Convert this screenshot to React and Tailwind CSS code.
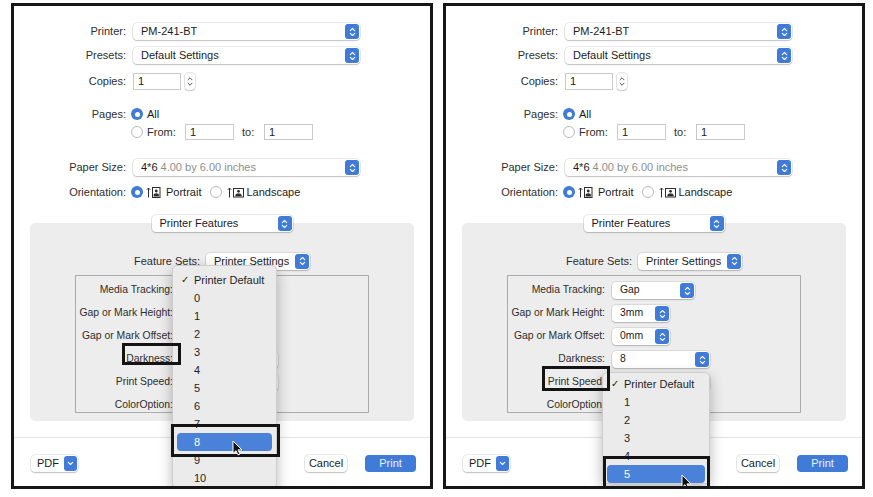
import React from "react";

// white up/down chevrons used on every popup knob
function Arrows() {
  return (
    <svg width="7" height="10" viewBox="0 0 7 10" fill="none" stroke="#fff" strokeWidth="1.1" strokeLinecap="round" strokeLinejoin="round">
      <path d="M1.3 3.7 3.5 1.5 5.7 3.7" />
      <path d="M1.3 6.3 3.5 8.5 5.7 6.3" />
    </svg>
  );
}

function BlueKnob() {
  return (
    <span className="flex h-[15px] w-[14px] shrink-0 items-center justify-center rounded-[3px] bg-[#3f7bd7]">
      <Arrows />
    </span>
  );
}

function Popup({ className = "", children }) {
  return (
    <div
      className={`flex h-[17px] shrink-0 items-center justify-between rounded-[4px] bg-white pl-[8px] pr-px shadow-[0_0_0_0.5px_rgba(0,0,0,0.16),0_1px_1.5px_rgba(0,0,0,0.18)] ${className}`}
    >
      <span className="truncate text-[#1c1c1c]">{children}</span>
      <BlueKnob />
    </div>
  );
}

function Radio({ on }) {
  if (on) {
    return (
      <span className="flex h-[12px] w-[12px] shrink-0 items-center justify-center rounded-full bg-[#3f7bd7]">
        <span className="h-[5px] w-[5px] rounded-full bg-white" />
      </span>
    );
  }
  return <span className="block h-[12px] w-[12px] shrink-0 rounded-full border border-[#b9b9b9] bg-white" />;
}

function Field({ className = "", children }) {
  return (
    <div className={`flex h-[16px] items-center border border-[#cacaca] bg-white pl-[4px] text-[#1c1c1c] ${className}`}>
      {children}
    </div>
  );
}

function PortraitIcon() {
  return (
    <svg width="15" height="13" viewBox="0 0 15 13" fill="none" stroke="#2c2c2c" strokeWidth="1">
      <path d="M2.5 11.5V2M0.9 3.7 2.5 2 4.1 3.7" />
      <rect x="6.5" y="1.5" width="7.5" height="10" />
      <circle cx="10.25" cy="5" r="1.4" fill="#2c2c2c" stroke="none" />
      <path d="M7.6 10.6h5.3V8.9c0-.9-1.1-1.7-2.65-1.7S7.6 8 7.6 8.9z" fill="#2c2c2c" stroke="none" />
    </svg>
  );
}

function LandscapeIcon() {
  return (
    <svg width="17" height="13" viewBox="0 0 17 13" fill="none" stroke="#2c2c2c" strokeWidth="1">
      <path d="M2.5 11.5V2M0.9 3.7 2.5 2 4.1 3.7" />
      <rect x="6.5" y="2.5" width="10" height="8.5" />
      <circle cx="11.5" cy="5.3" r="1.4" fill="#2c2c2c" stroke="none" />
      <path d="M8.4 10.3h6.2V9c0-.9-1.3-1.6-3.1-1.6S8.4 8.1 8.4 9z" fill="#2c2c2c" stroke="none" />
    </svg>
  );
}

function Row({ label, className = "", children }) {
  return (
    <div className={`flex items-center ${className}`}>
      <span className="w-[112px] shrink-0 text-right text-[#2e2e2e]">{label}</span>
      <div className="ml-[7px] flex items-center">{children}</div>
    </div>
  );
}

function Cursor({ className = "" }) {
  return (
    <svg className={`absolute z-30 ${className}`} width="11" height="16" viewBox="0 0 11 16">
      <path d="M1 1v12.4l3-2.7 2 4.2 2-.9-2-4.1h4z" fill="#111" stroke="#fff" strokeWidth="1" strokeLinejoin="round" />
    </svg>
  );
}

function Menu({ items, active, className = "" }) {
  return (
    <div
      className={`absolute z-20 rounded-[5px] border border-[#cdcdcd] bg-[#ebebeb] shadow-[0_5px_14px_rgba(0,0,0,0.28)] ${className}`}
    >
      {items.map((item, i) => (
        <div
          key={item}
          className={`relative mx-[4px] flex h-[18px] items-center rounded-[4px] pl-[17px] ${
            item === active ? "bg-[#4a82d9] text-white" : "text-[#1f1f1f]"
          }`}
        >
          {i === 0 && <span className="absolute left-[4px] font-['DejaVu_Sans',sans-serif] text-[10px]">✓</span>}
          {item}
        </div>
      ))}
    </div>
  );
}

function PrintDialog({ side }) {
  const left = side === "left";

  const features = [
    ["Media Tracking:", "Gap", "w-[83px]"],
    ["Gap or Mark Height:", "3mm", "w-[58px]"],
    ["Gap or Mark Offset:", "0mm", "w-[58px]"],
    ["Darkness:", left ? "Printer Default" : "8", "w-[98px]"],
    ["Print Speed:", "Printer Default", "w-[98px]"],
    ["ColorOption:", "Black", "w-[88px]"],
  ];

  return (
    <div className="relative h-[486px] w-[422px] shrink-0 overflow-hidden border-[3px] border-[#161616] bg-white">
      <div className="flex flex-col pt-[17px]">
        <Row label="Printer:">
          <Popup className="w-[227px]">PM-241-BT</Popup>
        </Row>
        <Row label="Presets:" className="mt-[7px]">
          <Popup className="w-[227px]">Default Settings</Popup>
        </Row>
        <Row label="Copies:" className="mt-[9px]">
          <Field className="h-[17px] w-[48px]">1</Field>
          <span className="ml-[4px] flex h-[17px] w-[10px] items-center justify-center rounded-[3px] bg-white shadow-[0_0_0_0.5px_rgba(0,0,0,0.2),0_1px_1px_rgba(0,0,0,0.15)]">
            <svg width="6" height="11" viewBox="0 0 6 11" fill="none" stroke="#555" strokeWidth="1" strokeLinecap="round" strokeLinejoin="round">
              <path d="M1 3.8 3 1.8 5 3.8M1 7.2 3 9.2 5 7.2" />
            </svg>
          </span>
        </Row>

        <Row label="Pages:" className="mt-[17px] h-[14px]">
          <span className="-ml-[2px] flex items-center gap-[4px]">
            <Radio on />
            <span className="text-[#1c1c1c]">All</span>
          </span>
        </Row>
        <div className="mt-[3px] flex h-[16px] items-center pl-[117px]">
          <Radio />
          <span className="ml-[4px] w-[38px] text-[#2e2e2e]">From:</span>
          <Field className="w-[49px]">1</Field>
          <span className="ml-[8px] w-[22px] text-[#2e2e2e]">to:</span>
          <Field className="w-[49px]">1</Field>
        </div>

        <Row label="Paper Size:" className="mt-[19px]">
          <Popup className="w-[227px]">
            4*6 <span className="text-[#8d8d8d]">4.00 by 6.00 inches</span>
          </Popup>
        </Row>
        <Row label="Orientation:" className="mt-[9px] h-[14px]">
          <span className="-ml-[2px] flex items-center">
            <Radio on />
            <span className="ml-[3px] flex"><PortraitIcon /></span>
            <span className="ml-[5px] text-[#1c1c1c]">Portrait</span>
            <span className="ml-[9px] flex"><Radio /></span>
            <span className="ml-[5px] flex"><LandscapeIcon /></span>
            <span className="ml-[2px] text-[#1c1c1c]">Landscape</span>
          </span>
        </Row>

        <div className="relative z-10 mt-[16px] flex justify-center">
          <Popup className="w-[141px]">Printer Features</Popup>
        </div>

        <div className="mx-[16px] -mt-[9px] rounded-[5px] bg-[#ededed] pb-[8px] pt-[30px]">
          <div className="flex h-[16px] items-center justify-center">
            <span className="text-[#2e2e2e]">Feature Sets:</span>
            <Popup className="ml-[6px] w-[104px]">Printer Settings</Popup>
          </div>
          <div className="mx-auto mt-[6px] h-[138px] w-[294px] border border-[#ababab] pt-[3px] text-[10.4px]">
            {features.map(([label, value, w]) => (
              <div key={label} className="flex h-[23px] items-center">
                <span className="w-[97px] shrink-0 whitespace-nowrap text-right text-[#2e2e2e]">{label}</span>
                <Popup className={`ml-[7px] ${w}`}>{value}</Popup>
              </div>
            ))}
          </div>
        </div>

        <div className="mt-[16px] h-px bg-[#e4e4e4]" />
        <div className="mt-[17px] flex h-[17px] items-center pl-[17px] pr-[14px]">
          <div className="flex h-[17px] w-[47px] items-center justify-between rounded-[4px] bg-white pl-[6px] pr-px shadow-[0_0_0_0.5px_rgba(0,0,0,0.16),0_1px_1.5px_rgba(0,0,0,0.18)]">
            <span className="text-[#1c1c1c]">PDF</span>
            <span className="flex h-[15px] w-[13px] items-center justify-center rounded-[3px] bg-[#3f7bd7]">
              <svg width="7" height="5" viewBox="0 0 7 5" fill="none" stroke="#fff" strokeWidth="1.1" strokeLinecap="round" strokeLinejoin="round">
                <path d="M1.3 1.3 3.5 3.5 5.7 1.3" />
              </svg>
            </span>
          </div>
          <div className="ml-auto flex h-[17px] w-[42px] items-center justify-center rounded-[4px] bg-white text-[#1c1c1c] shadow-[0_0_0_0.5px_rgba(0,0,0,0.16),0_1px_1.5px_rgba(0,0,0,0.18)]">
            Cancel
          </div>
          <div className="ml-[18px] flex h-[17px] w-[51px] items-center justify-center rounded-[4px] bg-[#3f7bd7] text-[#e8f0fc]">
            Print
          </div>
        </div>
      </div>

      {left ? (
        <>
          <Menu
            className="left-[158px] top-[259px] w-[105px] pt-[5px]"
            items={["Printer Default", "0", "1", "2", "3", "4", "5", "6", "7", "8", "9", "10"]}
            active="8"
          />
          <div className="absolute left-[108px] top-[337px] z-30 h-[22px] w-[59px] border-[3px] border-[#141414]" />
          <div className="absolute left-[157px] top-[418px] z-30 h-[33px] w-[109px] border-[3px] border-[#141414]" />
          <Cursor className="left-[218px] top-[434px]" />
        </>
      ) : (
        <>
          <Menu
            className="left-[156px] top-[366px] w-[108px] pt-[2px]"
            items={["Printer Default", "1", "2", "3", "4", "5"]}
            active="5"
          />
          <div className="absolute left-[96px] top-[360px] z-30 h-[25px] w-[68px] border-[3px] border-[#141414]" />
          <div className="absolute left-[157px] top-[450px] z-30 h-[36px] w-[107px] border-[3px] border-[#141414]" />
          <Cursor className="left-[235px] top-[468px]" />
        </>
      )}
    </div>
  );
}

export default function App() {
  return (
    <div className="min-h-screen bg-white font-['Liberation_Sans',Arial,sans-serif] text-[11px] leading-none">
      <div className="flex gap-[10px] pl-[11px] pt-[3px]">
        <PrintDialog side="left" />
        <PrintDialog side="right" />
      </div>
    </div>
  );
}
